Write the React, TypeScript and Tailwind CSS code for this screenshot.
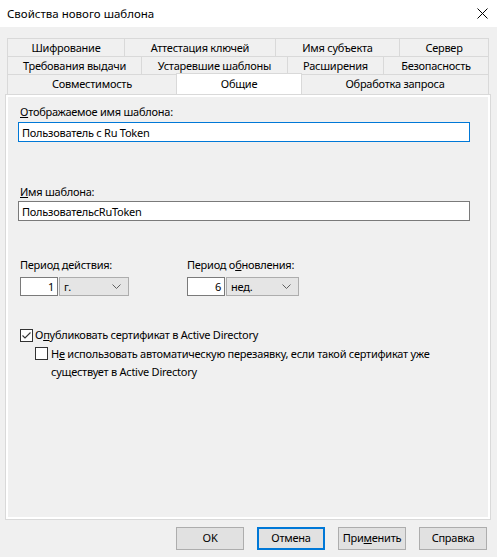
import React from "react"

const tabRows = [
  [
    { label: "Шифрование", w: "w-[117px]" },
    { label: "Аттестация ключей", w: "w-[151px]" },
    { label: "Имя субъекта", w: "w-[124px]" },
    { label: "Сервер", w: "w-[90px]" },
  ],
  [
    { label: "Требования выдачи", w: "w-[134px]" },
    { label: "Устаревшие шаблоны", w: "w-[146px]" },
    { label: "Расширения", w: "w-[96px]" },
    { label: "Безопасность", w: "w-[106px]" },
  ],
]

const Chevron = () => (
  <svg width="9" height="5" viewBox="0 0 9 5" className="shrink-0">
    <path d="M0.5 0.5 L4.5 4.5 L8.5 0.5" fill="none" stroke="#606060" strokeWidth="1" />
  </svg>
)

const CheckBox = ({ checked }: { checked?: boolean }) => (
  <span className="w-[13px] h-[13px] border border-[#333333] bg-white shrink-0 flex items-center justify-center">
    {checked && (
      <svg width="11" height="11" viewBox="0 0 11 11">
        <path d="M1.5 5.5 L4 8 L9.5 2.5" fill="none" stroke="#333333" strokeWidth="1.1" />
      </svg>
    )}
  </span>
)

const Btn = ({ children, focused }: { children: React.ReactNode; focused?: boolean }) => (
  <button
    className={
      "w-[68px] h-[23px] flex items-center justify-center bg-[#e1e1e1] text-black " +
      (focused ? "border-2 border-[#0078d7]" : "border border-[#adadad]")
    }
  >
    {children}
  </button>
)

export default function App() {
  return (
    <div
      className="w-[497px] h-[557px] bg-[#f0f0f0] text-[11px] tracking-[-0.25px] text-black flex flex-col"
      style={{ fontFamily: '"Noto Sans", "Open Sans", sans-serif' }}
    >
      {/* title bar */}
      <div className="h-[27px] bg-white flex items-center justify-between pl-[7px] pr-[9px] shrink-0">
        <span className="text-[11.5px] tracking-normal">Свойства нового шаблона</span>
        <svg width="11" height="11" viewBox="0 0 11 11">
          <path d="M0.5 0.5 L10.5 10.5 M10.5 0.5 L0.5 10.5" stroke="#000" strokeWidth="1" />
        </svg>
      </div>

      {/* tabs */}
      <div className="pt-[11px] pl-[7px] flex flex-col">
        {tabRows.map((row, i) => (
          <div key={i} className="flex h-[18px]">
            {row.map((t, j) => (
              <div
                key={t.label}
                className={
                  t.w +
                  " border-t border-l border-[#d9d9d9] flex items-center justify-center leading-none " +
                  (j === row.length - 1 ? "border-r" : "")
                }
              >
                {t.label}
              </div>
            ))}
          </div>
        ))}
        <div className="flex h-[20px] relative z-10">
          <div className="w-[169px] border-t border-l border-[#d9d9d9] flex items-center justify-center">
            Совместимость
          </div>
          <div className="w-[126px] -mb-px bg-white border-t border-l border-r border-[#d9d9d9] flex items-center justify-center h-[21px] -mt-px">
            Общие
          </div>
          <div className="w-[187px] border-t border-r border-[#d9d9d9] flex items-center justify-center">
            Обработка запроса
          </div>
        </div>
      </div>

      {/* page */}
      <div className="ml-[5px] w-[486px] h-[426px] border border-[#d9d9d9] bg-white p-[2px] shrink-0">
        <div className="h-full bg-[#f0f0f0] pl-[10px] pt-[7px] flex flex-col">
          <label className="ml-[2px] leading-[16px]">
            <u>О</u>тображаемое имя шаблона:
          </label>
          <div className="mt-[2px] w-[452px] h-[20px] border border-[#0078d7] bg-white flex items-center pl-[3px] leading-none">
            Пользователь с Ru Token
          </div>

          <label className="ml-[2px] mt-[42px] leading-[16px]">
            <u>И</u>мя шаблона:
          </label>
          <div className="mt-[1px] w-[452px] h-[20px] border border-[#7a7a7a] bg-white flex items-center pl-[3px] leading-none">
            ПользовательсRuToken
          </div>

          <div className="mt-[36px] ml-[2px] flex">
            <div className="w-[167px] flex flex-col">
              <span className="leading-[16px]">
                Период <u>д</u>ействия:
              </span>
              <div className="mt-[4px] flex gap-[1px]">
                <div className="w-[38px] h-[19px] border border-[#7a7a7a] bg-white flex items-center justify-end pr-[3px] leading-none">
                  1
                </div>
                <div className="w-[70px] h-[19px] border border-[#adadad] bg-[#e5e5e5] flex items-center justify-between pl-[4px] pr-[7px] leading-none">
                  <span>г.</span>
                  <Chevron />
                </div>
              </div>
            </div>
            <div className="flex flex-col">
              <span className="leading-[16px]">
                Период о<u>б</u>новления:
              </span>
              <div className="mt-[4px] flex gap-[1px]">
                <div className="w-[38px] h-[19px] border border-[#7a7a7a] bg-white flex items-center justify-end pr-[3px] leading-none">
                  6
                </div>
                <div className="w-[73px] h-[19px] border border-[#adadad] bg-[#e5e5e5] flex items-center justify-between pl-[4px] pr-[7px] leading-none">
                  <span>нед.</span>
                  <Chevron />
                </div>
              </div>
            </div>
          </div>

          <div className="mt-[31px] ml-[2px] flex items-center h-[16px] gap-[2px]">
            <CheckBox checked />
            <span className="leading-[16px]">
              О<u>п</u>убликовать сертификат в Active Directory
            </span>
          </div>

          <div className="mt-[2px] ml-[17px] flex items-start">
            <span className="mt-[2px]">
              <CheckBox />
            </span>
            <span className="ml-[3px] leading-[18px] w-[420px]">
              Н<u>е</u> использовать автоматическую перезаявку, если такой сертификат уже существует в Active Directory
            </span>
          </div>
        </div>
      </div>

      {/* buttons */}
      <div className="mt-[7px] flex justify-end gap-[13px] pr-[10px]">
        <Btn>OK</Btn>
        <Btn focused>Отмена</Btn>
        <Btn>
          При<u>м</u>енить
        </Btn>
        <Btn>Справка</Btn>
      </div>
    </div>
  )
}
